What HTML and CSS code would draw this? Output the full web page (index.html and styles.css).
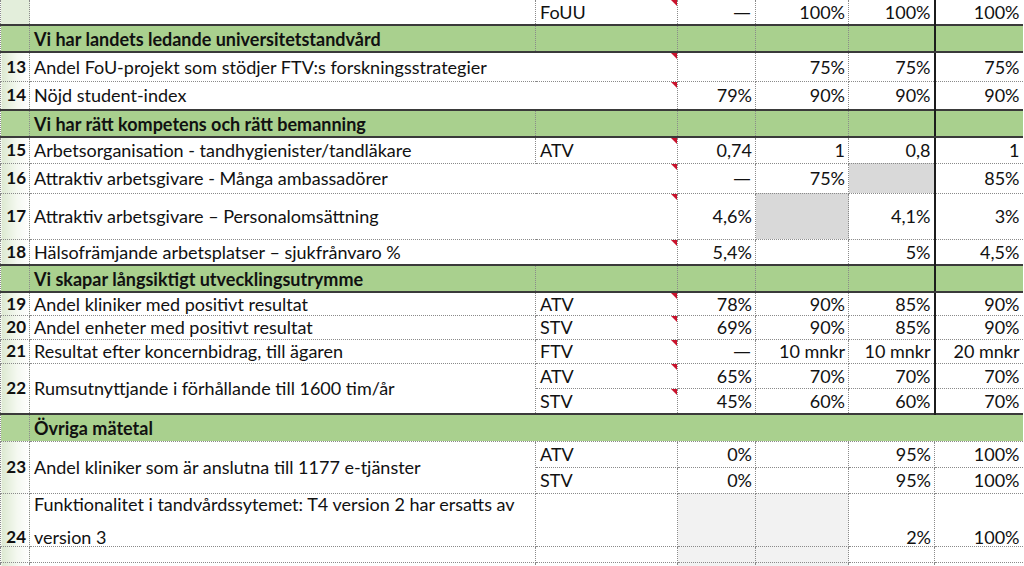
FILE: index.html
```html
<!DOCTYPE html>
<html lang="sv">
<head>
<meta charset="utf-8">
<title>Mål och mätetal</title>
<link rel="stylesheet" href="styles.css">
</head>
<body>
<table class="sheet">
  <colgroup>
    <col class="c-a"><col class="c-b"><col class="c-c"><col class="c-d"><col class="c-e"><col class="c-f"><col class="c-g">
  </colgroup>
  <tbody>
    <tr class="h25">
      <td class="num num-top"></td><td></td>
      <td class="unit has-note">FoUU<span class="note"></span></td>
      <td class="val"><span class="dash">—</span></td><td class="val">100%</td><td class="val sep">100%</td><td class="val">100%</td>
    </tr>
    <tr class="sec h27">
      <td class="num"></td><td class="txt">Vi har landets ledande universitetstandvård</td>
      <td></td><td></td><td></td><td class="sep"></td><td></td>
    </tr>
    <tr class="h29">
      <td class="num">13</td>
      <td class="txt has-note" colspan="2">Andel FoU-projekt som stödjer FTV:s forskningsstrategier<span class="note"></span></td>
      <td class="val"></td><td class="val">75%</td><td class="val sep">75%</td><td class="val">75%</td>
    </tr>
    <tr class="h29">
      <td class="num">14</td>
      <td class="txt has-note" colspan="2">Nöjd student-index<span class="note"></span></td>
      <td class="val">79%</td><td class="val">90%</td><td class="val sep">90%</td><td class="val">90%</td>
    </tr>
    <tr class="sec h27">
      <td class="num"></td><td class="txt">Vi har rätt kompetens och rätt bemanning</td>
      <td></td><td></td><td></td><td class="sep"></td><td></td>
    </tr>
    <tr class="h26">
      <td class="num">15</td>
      <td class="txt">Arbetsorganisation - tandhygienister/tandläkare</td>
      <td class="unit has-note">ATV<span class="note"></span></td>
      <td class="val">0,74</td><td class="val">1</td><td class="val sep">0,8</td><td class="val">1</td>
    </tr>
    <tr class="h30">
      <td class="num">16</td>
      <td class="txt has-note" colspan="2">Attraktiv arbetsgivare - Många ambassadörer<span class="note"></span></td>
      <td class="val"><span class="dash">—</span></td><td class="val">75%</td><td class="val sep gray"></td><td class="val">85%</td>
    </tr>
    <tr class="h46">
      <td class="num">17</td>
      <td class="txt has-note" colspan="2">Attraktiv arbetsgivare – Personalomsättning<span class="note"></span></td>
      <td class="val">4,6%</td><td class="val gray"></td><td class="val sep">4,1%</td><td class="val">3%</td>
    </tr>
    <tr class="h26">
      <td class="num">18</td>
      <td class="txt has-note" colspan="2">Hälsofrämjande arbetsplatser – sjukfrånvaro %<span class="note"></span></td>
      <td class="val">5,4%</td><td class="val"></td><td class="val sep">5%</td><td class="val">4,5%</td>
    </tr>
    <tr class="sec h27">
      <td class="num"></td><td class="txt">Vi skapar långsiktigt utvecklingsutrymme</td>
      <td></td><td></td><td></td><td class="sep"></td><td></td>
    </tr>
    <tr class="h23">
      <td class="num">19</td>
      <td class="txt">Andel kliniker med positivt resultat</td>
      <td class="unit has-note">ATV<span class="note"></span></td>
      <td class="val">78%</td><td class="val">90%</td><td class="val sep">85%</td><td class="val">90%</td>
    </tr>
    <tr class="h24">
      <td class="num">20</td>
      <td class="txt">Andel enheter med positivt resultat</td>
      <td class="unit has-note">STV<span class="note"></span></td>
      <td class="val">69%</td><td class="val">90%</td><td class="val sep">85%</td><td class="val">90%</td>
    </tr>
    <tr class="h24">
      <td class="num">21</td>
      <td class="txt">Resultat efter koncernbidrag, till ägaren</td>
      <td class="unit has-note">FTV<span class="note"></span></td>
      <td class="val"><span class="dash">—</span></td><td class="val">10 mnkr</td><td class="val sep">10 mnkr</td><td class="val">20 mnkr</td>
    </tr>
    <tr class="h25">
      <td class="num" rowspan="2">22</td>
      <td class="txt" rowspan="2">Rumsutnyttjande i förhållande till 1600 tim/år</td>
      <td class="unit has-note">ATV<span class="note"></span></td>
      <td class="val">65%</td><td class="val">70%</td><td class="val sep">70%</td><td class="val">70%</td>
    </tr>
    <tr class="h26">
      <td class="unit has-note">STV<span class="note"></span></td>
      <td class="val">45%</td><td class="val">60%</td><td class="val sep">60%</td><td class="val">70%</td>
    </tr>
    <tr class="sec sec-last h27">
      <td class="num"></td><td class="txt" colspan="6">Övriga mätetal</td>
    </tr>
    <tr class="h26">
      <td class="num" rowspan="2">23</td>
      <td class="txt" rowspan="2">Andel kliniker som är anslutna till 1177 e-tjänster</td>
      <td class="unit">ATV</td>
      <td class="val">0%</td><td class="val"></td><td class="val">95%</td><td class="val">100%</td>
    </tr>
    <tr class="h26">
      <td class="unit">STV</td>
      <td class="val">0%</td><td class="val"></td><td class="val">95%</td><td class="val">100%</td>
    </tr>
    <tr class="h53 bottom">
      <td class="num">24</td>
      <td class="txt"><div class="wrap"><span>Funktionalitet i tandvårdssytemet: T4 version 2 har ersatts av</span><span>version 3</span></div></td>
      <td class="unit"></td>
      <td class="val light"></td><td class="val light"></td><td class="val">2%</td><td class="val">100%</td>
    </tr>
    <tr class="h16">
      <td class="num"></td><td></td><td></td><td class="light"></td><td class="light"></td><td></td><td></td>
    </tr>
    <tr class="h16">
      <td class="num"></td><td></td><td></td><td class="light"></td><td class="light"></td><td></td><td></td>
    </tr>
  </tbody>
</table>
</body>
</html>
```

FILE: styles.css
```css
html, body {
  margin: 0;
  padding: 0;
  background: #ffffff;
}

body {
  font-family: Lato, "Liberation Sans", sans-serif;
  font-size: 18px;
  color: #111111;
  overflow: hidden;
}

.sheet {
  border-collapse: collapse;
  table-layout: fixed;
  width: 1022px;
}

.c-a { width: 29px; }
.c-b { width: 506px; }
.c-c { width: 142px; }
.c-d { width: 78px; }
.c-e { width: 93px; }
.c-f { width: 86px; }
.c-g { width: 88px; }

.sheet td {
  border: 1px dotted #8a8a8a;
  padding: 0 3px 0 4px;
  white-space: nowrap;
  vertical-align: middle;
  line-height: 18px;
}

.sheet tr:first-child td {
  border-top: none;
}

.sheet td:last-child {
  border-right: none;
}

.h16 { height: 16px; }
.h23 { height: 23px; }
.h24 { height: 24px; }
.h25 { height: 25px; }
.h26 { height: 26px; }
.h27 { height: 27px; }
.h29 { height: 29px; }
.h30 { height: 30px; }
.h46 { height: 46px; }
.h53 { height: 53px; }

.num {
  font-weight: 700;
  font-size: 17px;
  text-align: right;
  padding: 0 3px 0 0 !important;
  background: linear-gradient(90deg, #dce9d1 0%, #f4f8f0 55%, #ffffff 100%);
}

.num-top {
  background: #e3eedb;
}

.val {
  text-align: right;
}

.unit {
  text-align: left;
}

.dash {
  font-family: "Liberation Sans", sans-serif;
  font-size: 16px;
  padding-right: 2px;
}

.has-note {
  position: relative;
}

.note {
  position: absolute;
  top: 0;
  right: 0;
  width: 0;
  height: 0;
  border-top: 6px solid #c9122c;
  border-left: 6px solid transparent;
}

.sep {
  border-right: 2px solid #1c1c1c !important;
}

.gray {
  background: #d9d9d9;
}

.light {
  background: #f2f2f2;
}

.sec td {
  background: #a9d08e;
  font-weight: 700;
  border-top: 2px solid #3a3a3a;
  border-bottom: 2px solid #3a3a3a;
}

.sec .num {
  background: #b0d497;
}

.sec-last td {
  border-bottom: 1px dotted #8a8a8a;
}

.bottom td {
  vertical-align: bottom;
}

.wrap {
  display: flex;
  flex-direction: column;
  justify-content: space-between;
  height: 51px;
  padding-top: 1px;
}

.wrap span {
  display: block;
  line-height: 18px;
}
```
